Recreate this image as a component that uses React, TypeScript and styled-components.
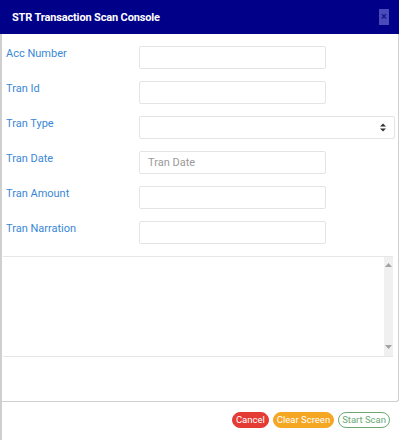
import { FunctionComponent, Fragment } from "react";
import styled, { createGlobalStyle } from "styled-components";

const GlobalStyle = createGlobalStyle`
  html, body {
    margin: 0;
    padding: 0;
    background: #ffffff;
  }
  * {
    box-sizing: border-box;
  }
`;

const Modal = styled.div`
  width: 399px;
  height: 440px;
  display: flex;
  flex-direction: column;
  font-family: Roboto, "Liberation Sans", sans-serif;
  background: #ffffff;
  overflow: hidden;
`;

const Header = styled.div`
  height: 34px;
  flex-shrink: 0;
  background: #000088;
  display: flex;
  flex-direction: row;
  align-items: center;
  justify-content: space-between;
  padding: 0 10px 0 12px;
`;

const Title = styled.div`
  color: #ffffff;
  font-size: 11px;
  font-weight: 700;
  letter-spacing: -0.15px;
`;

const CloseButton = styled.div`
  width: 10px;
  height: 16px;
  background: #4a4ab8;
  color: #15158f;
  font-size: 11px;
  font-weight: 700;
  line-height: 16px;
  text-align: center;
`;

const Body = styled.div`
  flex: 1;
  display: flex;
  flex-direction: column;
  border-left: 2px solid #cfcfcf;
`;

const Panel = styled.div`
  height: 368px;
  flex-shrink: 0;
  border-right: 1px solid #cfcfcf;
  border-bottom: 1px solid #cfcfcf;
  border-bottom-right-radius: 3px;
  display: flex;
  flex-direction: column;
  padding: 12px 1px 0 1px;
`;

const Form = styled.div`
  display: grid;
  grid-template-columns: 133px 1fr;
  row-gap: 12px;
  padding-left: 3px;
`;

const Label = styled.div`
  color: #3a87d6;
  font-size: 11px;
  line-height: 14px;
  padding-top: 1px;
`;

const Input = styled.div<{ $wide?: boolean }>`
  height: 23px;
  width: ${(p) => (p.$wide ? "256px" : "187px")};
  border: 1px solid #e4e4e4;
  border-radius: 2px;
  display: flex;
  flex-direction: row;
  align-items: center;
  justify-content: space-between;
  padding: 0 8px;
  font-size: 11px;
  color: #9a9a9a;
`;

const Output = styled.div`
  margin: 12px 4px 0 0;
  height: 101px;
  border-top: 1px solid #e6e6e6;
  border-bottom: 1px solid #e6e6e6;
  display: flex;
  flex-direction: row;
`;

const OutputText = styled.div`
  flex: 1;
  background: #ffffff;
`;

const ScrollTrack = styled.div`
  width: 9px;
  background: #f0f0f0;
  display: flex;
  flex-direction: column;
  align-items: center;
  justify-content: space-between;
  padding: 6px 0 7px;
`;

const Footer = styled.div`
  flex: 1;
  display: flex;
  flex-direction: row;
  justify-content: flex-end;
  align-items: flex-start;
  gap: 4px;
  padding: 10px 9px 0 0;
`;

const Pill = styled.div<{ $bg: string; $fg: string; $border: string }>`
  height: 16px;
  border-radius: 8px;
  padding: 0 3px;
  background: ${(p) => p.$bg};
  color: ${(p) => p.$fg};
  border: 1px solid ${(p) => p.$border};
  font-size: 9.5px;
  line-height: 14px;
  display: flex;
  align-items: center;
`;

const SortIcon: FunctionComponent = () => (
  <svg width="6" height="9" viewBox="0 0 6 9">
    <path d="M0 3.6 L3 0.4 L6 3.6 Z" fill="#333" />
    <path d="M0 5.4 L3 8.6 L6 5.4 Z" fill="#333" />
  </svg>
);

const Arrow: FunctionComponent<{ up?: boolean }> = ({ up }) => (
  <svg width="7" height="4" viewBox="0 0 7 4">
    <path d={up ? "M0 4 L3.5 0 L7 4 Z" : "M0 0 L3.5 4 L7 0 Z"} fill="#a3a3a3" />
  </svg>
);

const fields = [
  { label: "Acc Number" },
  { label: "Tran Id" },
  { label: "Tran Type", select: true },
  { label: "Tran Date", placeholder: "Tran Date" },
  { label: "Tran Amount" },
  { label: "Tran Narration" },
];

const App: FunctionComponent = () => {
  return (
    <>
      <GlobalStyle />
      <Modal>
        <Header>
          <Title>STR Transaction Scan Console</Title>
          <CloseButton>×</CloseButton>
        </Header>
        <Body>
          <Panel>
            <Form>
              {fields.map((f) => (
                <Fragment key={f.label}>
                  <Label>{f.label}</Label>
                  <Input $wide={f.select}>
                    <span>{f.placeholder}</span>
                    {f.select && <SortIcon />}
                  </Input>
                </Fragment>
              ))}
            </Form>
            <Output>
              <OutputText />
              <ScrollTrack>
                <Arrow up />
                <Arrow />
              </ScrollTrack>
            </Output>
          </Panel>
          <Footer>
            <Pill $bg="#e53b35" $fg="#ffffff" $border="#e53b35">Cancel</Pill>
            <Pill $bg="#f5a623" $fg="#ffffff" $border="#f5a623">Clear Screen</Pill>
            <Pill $bg="#ffffff" $fg="#6aa875" $border="#6aa875">Start Scan</Pill>
          </Footer>
        </Body>
      </Modal>
    </>
  );
};

export default App;
